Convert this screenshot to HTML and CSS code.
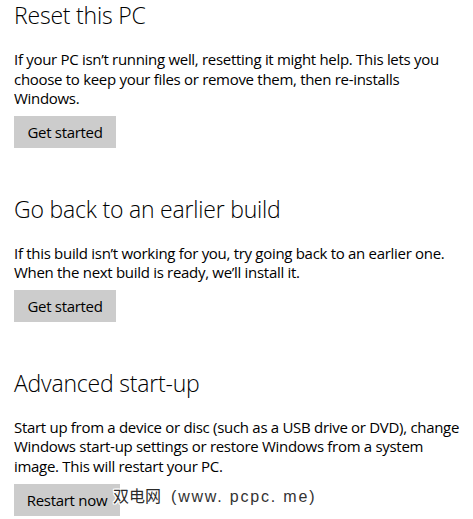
FILE: index.html
```html
<!DOCTYPE html>
<html lang="en">
<head>
<meta charset="utf-8">
<title>Recovery</title>
<link rel="stylesheet" href="styles.css">
</head>
<body>
<main class="page">
  <section class="group">
    <h2 class="group-title">Reset this PC</h2>
    <p class="group-text">If your PC isn’t running well, resetting it might help. This lets you<br>choose to keep your files or remove them, then re-installs<br>Windows.</p>
    <button class="btn" type="button">Get started</button>
  </section>
  <section class="group">
    <h2 class="group-title">Go back to an earlier build</h2>
    <p class="group-text">If this build isn’t working for you, try going back to an earlier one.<br>When the next build is ready, we’ll install it.</p>
    <button class="btn" type="button">Get started</button>
  </section>
  <section class="group">
    <h2 class="group-title">Advanced start-up</h2>
    <p class="group-text">Start up from a device or disc (such as a USB drive or DVD), change<br>Windows start-up settings or restore Windows from a system<br>image. This will restart your PC.</p>
    <button class="btn btn-wide" type="button">Restart now</button>
  </section>
  <div class="watermark">双电网<span class="watermark-url">(www. pcpc. me)</span></div>
</main>
</body>
</html>
```

FILE: styles.css
```css
html, body {
  margin: 0;
  padding: 0;
  background: #ffffff;
}

.page {
  position: relative;
  width: 473px;
  height: 519px;
  overflow: hidden;
  padding: 0 0 0 14px;
  box-sizing: border-box;
  font-family: "Open Sans", "Noto Sans", sans-serif;
  color: #000000;
}

.group {
  display: flex;
  flex-direction: column;
  align-items: flex-start;
  margin-bottom: 45.5px;
}

.group-title {
  margin: 0;
  font-size: 23px;
  line-height: 30px;
  font-weight: 300;
  letter-spacing: -0.2px;
  white-space: nowrap;
}

.group-text {
  margin: 20px 0 0 0;
  font-size: 15px;
  line-height: 19.5px;
  font-weight: 400;
  letter-spacing: -0.3px;
  white-space: nowrap;
}

.btn {
  margin-top: 7.5px;
  height: 32px;
  width: 102px;
  padding: 0;
  border: 0;
  background: #cccccc;
  color: #000000;
  font-family: inherit;
  font-size: 15px;
  line-height: 32px;
  letter-spacing: -0.3px;
  text-align: center;
}

.btn-wide {
  width: 106px;
}

.watermark {
  position: absolute;
  left: 113px;
  top: 484px;
  font-family: "Noto Sans CJK SC", "Liberation Sans", sans-serif;
  font-size: 16px;
  line-height: 22px;
  color: #2a2a2a;
  white-space: nowrap;
  text-shadow: 1px 0 0 #fff, -1px 0 0 #fff, 0 1px 0 #fff, 0 -1px 0 #fff, 1px 1px 0 #fff, -1px -1px 0 #fff, 1px -1px 0 #fff, -1px 1px 0 #fff;
}

.watermark-url {
  margin-left: 10px;
  font-family: "Liberation Sans", sans-serif;
  font-size: 16px;
  letter-spacing: 1.8px;
  color: #333333;
}
```
